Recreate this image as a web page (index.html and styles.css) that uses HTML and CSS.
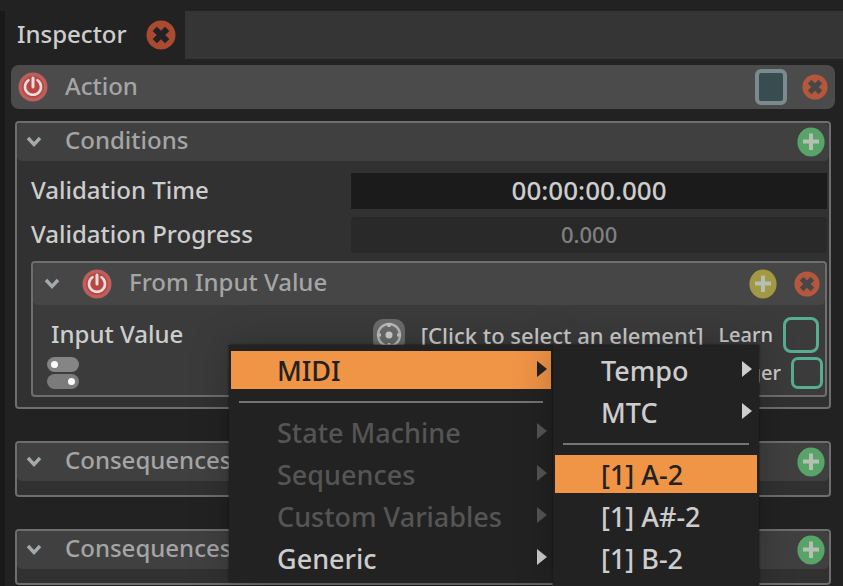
FILE: index.html
```html
<!DOCTYPE html>
<html lang="en">
<head>
<meta charset="utf-8">
<title>Inspector</title>
<link rel="stylesheet" href="styles.css">
</head>
<body>
<svg class="defs" aria-hidden="true">
  <symbol id="cross" viewBox="0 0 30 30">
    <circle cx="15" cy="15" r="14.500" fill="var(--disc)"/>
    <path d="M8.800 8.800 21.200 21.200M21.200 8.800 8.800 21.200" stroke="var(--mark)" stroke-width="6" fill="none"/>
  </symbol>
  <symbol id="plus" viewBox="0 0 28 30">
    <ellipse cx="14" cy="15" rx="13.600" ry="14.400" fill="var(--disc)"/>
    <path d="M14 6.500v16.500M6 14.500h16" stroke="#b4c0b4" stroke-width="4" fill="none"/>
  </symbol>
  <symbol id="power" viewBox="0 0 30 30">
    <circle cx="15" cy="15" r="14.500" fill="#bd5f5c"/>
    <circle cx="15" cy="15" r="11" fill="#b64743"/>
    <path d="M10.500 8.200a8 8 0 1 0 9 0" stroke="#ecdcdb" stroke-width="2.600" fill="none" stroke-linecap="round"/>
    <path d="M15 6v9" stroke="#ecdcdb" stroke-width="3" stroke-linecap="round"/>
  </symbol>
  <symbol id="chevron" viewBox="0 0 16 12">
    <path d="M2 2 8 8.500l6-6.500" stroke="#a3aaad" stroke-width="3.400" fill="none"/>
  </symbol>
</svg>

<main class="app">
  <header class="tabs">
    <div class="tab">
      <span>Inspector</span>
      <button class="icon close-tab" aria-label="Close tab"><svg><use href="#cross"/></svg></button>
    </div>
  </header>

  <section class="inspector">
    <div class="action">
      <button class="icon power" aria-label="Enable action"><svg><use href="#power"/></svg></button>
      <h1>Action</h1>
      <button class="swatch" aria-label="Colour"></button>
      <button class="icon remove" aria-label="Remove action"><svg><use href="#cross"/></svg></button>
    </div>

    <section class="group">
      <div class="group-head">
        <button class="chevron" aria-label="Collapse"><svg><use href="#chevron"/></svg></button>
        <h2>Conditions</h2>
        <button class="icon add" aria-label="Add condition"><svg><use href="#plus"/></svg></button>
      </div>
      <div class="group-body">
        <div class="field">
          <label for="time">Validation Time</label>
          <input id="time" class="time" type="text" value="00:00:00.000">
        </div>
        <div class="field">
          <label for="progress">Validation Progress</label>
          <input id="progress" class="progress" type="text" value="0.000" readonly>
        </div>

        <section class="condition">
          <div class="condition-head">
            <button class="chevron" aria-label="Collapse"><svg><use href="#chevron"/></svg></button>
            <button class="icon power" aria-label="Enable condition"><svg><use href="#power"/></svg></button>
            <h3>From Input Value</h3>
            <button class="icon add add-yellow" aria-label="Add"><svg><use href="#plus"/></svg></button>
            <button class="icon remove" aria-label="Remove condition"><svg><use href="#cross"/></svg></button>
          </div>
          <div class="source">
            <span class="source-name">Input Value</span>
            <button class="target">
              <svg viewBox="0 0 32 32" aria-hidden="true">
                <rect width="32" height="32" rx="10" fill="#6b6b6b"/>
                <circle cx="16" cy="16" r="11" stroke="#b9b9b9" stroke-width="2.400" fill="none"/>
                <path d="M16 4v4M16 24v4M4 16h4M24 16h4" stroke="#c4c4c4" stroke-width="3"/>
                <circle cx="16" cy="16" r="3.500" fill="#d0d0d0"/>
              </svg>
              <span>[Click to select an element]</span>
            </button>
            <label for="learn">Learn</label>
            <input id="learn" class="check check-large" type="checkbox">
          </div>
          <div class="options">
            <button class="toggles" aria-label="Conditions mode">
              <svg viewBox="0 0 32 32">
                <rect width="32" height="15" rx="7.500" fill="#858585"/>
                <circle cx="7.500" cy="7.500" r="3.500" fill="#fff"/>
                <rect y="17" width="32" height="15" rx="7.500" fill="#7b7b7b"/>
                <circle cx="24.500" cy="24.500" r="3.500" fill="#fff"/>
              </svg>
            </button>
            <label for="always">Trigger</label>
            <input id="always" class="check" type="checkbox">
          </div>
        </section>
      </div>
    </section>

    <section class="group">
      <div class="group-head">
        <button class="chevron" aria-label="Collapse"><svg><use href="#chevron"/></svg></button>
        <h2>Consequences</h2>
        <button class="icon add" aria-label="Add consequence"><svg><use href="#plus"/></svg></button>
      </div>
    </section>

    <section class="group">
      <div class="group-head">
        <button class="chevron" aria-label="Collapse"><svg><use href="#chevron"/></svg></button>
        <h2>Consequences</h2>
        <button class="icon add" aria-label="Add consequence"><svg><use href="#plus"/></svg></button>
      </div>
    </section>
  </section>
</main>

<div class="menus">
  <div class="menu menu-main" role="menu">
    <button class="item parent selected" role="menuitem">MIDI</button>
    <hr>
    <button class="item parent" role="menuitem" disabled>State Machine</button>
    <button class="item parent" role="menuitem" disabled>Sequences</button>
    <button class="item parent" role="menuitem" disabled>Custom Variables</button>
    <button class="item parent" role="menuitem">Generic</button>
  </div>
  <div class="menu menu-sub" role="menu">
    <button class="item parent" role="menuitem">Tempo</button>
    <button class="item parent" role="menuitem">MTC</button>
    <hr>
    <button class="item selected" role="menuitem">[1] A-2</button>
    <button class="item" role="menuitem">[1] A#-2</button>
    <button class="item" role="menuitem">[1] B-2</button>
  </div>
</div>
</body>
</html>
```
FILE: styles.css
```css
* { box-sizing: border-box; }

body {
  display: flow-root;
  margin: 0;
  min-height: 100vh;
  overflow: hidden;
  background: #222;
  color: #cdcdcd;
  font: 500 24px/32px "Noto Sans", "Lucida Grande", sans-serif;
}

button, input {
  margin: 0;
  padding: 0;
  border: 0;
  background: none;
  color: inherit;
  font: inherit;
}

h1, h2, h3 {
  flex: 1;
  margin: 0;
  padding-bottom: 2px;
  color: #a5a5a5;
  font-size: 24px;
  font-weight: 500;
}
h2, h3 { padding-bottom: 4px; }

.defs { position: absolute; width: 0; height: 0; }

.app {
  margin-top: 11px;
  border-left: 5px solid #191919;
  min-height: calc(100vh - 11px);
}

.tabs { height: 48px; background: #353535; }

.tab {
  display: flex;
  align-items: center;
  justify-content: space-between;
  width: 180px;
  height: 100%;
  padding: 0 9px 0 12px;
  background: #222;
}
.tab span { padding-bottom: 2px; }

.icon {
  display: block;
  flex: none;
  width: 30px;
  height: 30px;
}
.icon svg { display: block; width: 100%; height: 100%; }
.close-tab { --disc: #a94a31; --mark: #222; }
.remove { --disc: #b5573c; --mark: #474747; width: 26px; height: 26px; }
.add { --disc: #58a468; width: 28px; }
.add-yellow { --disc: #a39843; }

.inspector { padding: 6px 8px 0 6px; }

.action {
  display: flex;
  align-items: center;
  height: 44px;
  padding: 0 7px;
  border-radius: 8px;
  background: #4b4b4b;
}
.action h1 { margin-left: 17px; }

.swatch {
  width: 32px;
  height: 36px;
  margin-right: 15px;
  border: 4px solid #7b8a8e;
  border-radius: 6px;
  background: #374d50;
}

.group {
  margin: 0 4px 32px;
  border: 2px solid #6e6e6e;
  border-radius: 4px;
  background: #313131;
  padding-bottom: 14px;
}
.action + .group { margin-top: 12px; }
.group:last-child { margin-bottom: 0; }

.group-head, .condition-head {
  display: flex;
  align-items: center;
  height: 38px;
  border-radius: 5px;
  background: #404040;
}
.group-head { padding: 0 4px 0 9px; }
.group-head h2 { margin-left: 23px; }

.chevron { width: 16px; height: 12px; }
.chevron svg { display: block; width: 16px; height: 12px; }

.group-body { padding: 12px 2px 0 14px; margin-bottom: -4px; }

.field {
  display: grid;
  grid-template-columns: 2fr 3fr;
  column-gap: 3px;
  align-items: center;
  height: 36px;
  margin-bottom: 8px;
}
.field label { padding-bottom: 2px; }
.field input {
  width: 100%;
  height: 36px;
  padding-bottom: 2px;
  text-align: center;
}
.field .time { background: #1b1b1b; font-size: 26px; }
.field .progress {
  border-radius: 4px;
  background: #292929;
  color: #808080;
  font-size: 22px;
}

.condition {
  border: 2px solid #6e6e6e;
  border-radius: 4px;
  background: #3b3b3b;
  padding-bottom: 6px;
}
.condition-head {
  height: 42px;
  padding: 0 5px 0 11px;
  background: #464646;
}
.condition-head .power { margin-left: 22px; }
.condition-head h3 { margin-left: 17px; }
.condition-head .remove { margin-left: 17px; }

.source, .options {
  display: flex;
  align-items: center;
  padding-left: 18px;
}
.source { margin-top: 12px; padding-right: 6px; }
.options { margin-top: 4px; padding-right: 2px; }
.source-name { flex: 1; padding-bottom: 2px; }
.source label, .options label {
  margin-right: 10px;
  font-size: 20px;
}
.target {
  display: flex;
  gap: 16px;
  align-items: center;
  margin-right: 15px;
  font-size: 22px;
}
.target svg, .toggles svg { display: block; width: 32px; height: 32px; }
.options .toggles { margin: 0 auto 0 -4px; }

.check {
  appearance: none;
  width: 32px;
  height: 32px;
  border: 3px solid #56ad94;
  border-radius: 7px;
}
.check-large { width: 36px; height: 36px; border-radius: 8px; }

.menus {
  position: absolute;
  top: 345px;
  bottom: 0;
  left: 229px;
  display: flex;
  align-items: flex-start;
}

.menu {
  padding: 4px 2px;
  background: #222;
  box-shadow: 0 0 2px #111, 0 0 36px rgba(0, 0, 0, 0.25);
}
.menu-main { width: 324px; padding-bottom: 5px; }
.menu-sub { width: 206px; align-self: stretch; }

.item {
  display: flex;
  align-items: center;
  justify-content: space-between;
  width: 100%;
  height: 38px;
  margin: 2px 0 4px;
  padding: 2px 4px 0 46px;
  font-size: 27px;
  line-height: 36px;
  text-align: left;
}
.item:disabled { color: #555; }
.selected { background: #f09446; color: #222; }

.parent::after {
  content: "";
  margin-bottom: 4px;
  border: solid transparent;
  border-width: 8px 0 8px 10px;
  border-left-color: currentColor;
}

.menu hr {
  height: 2px;
  margin: 12px 8px 10px;
  border: 0;
  background: #747474;
}
.menu-sub .parent { padding-right: 5px; }
.menu > :last-child { margin-bottom: 0; }
```
